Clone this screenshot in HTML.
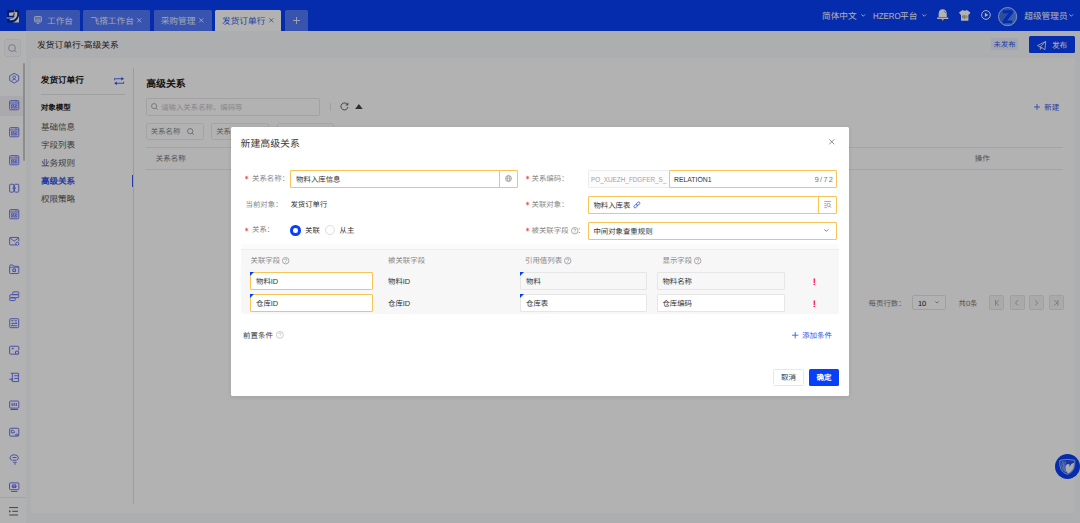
<!DOCTYPE html>
<html lang="zh-CN">
<head>
<meta charset="utf-8">
<title>发货订单行-高级关系</title>
<style>
*{box-sizing:border-box;margin:0;padding:0}
html,body{width:1080px;height:523px;overflow:hidden}
body{position:relative;background:#f8f9fc;font-family:"Liberation Sans",sans-serif;font-size:7.4px;color:#333;-webkit-font-smoothing:antialiased;text-rendering:geometricPrecision}
.a{position:absolute}
.t{position:absolute;white-space:nowrap;line-height:1;margin-top:.4px}
svg{position:absolute;overflow:visible}
/* top bar */
#top{left:0;top:0;width:1080px;height:31px;background:#0840f8}
.tab{position:absolute;top:10px;height:21px;background:rgba(255,255,255,.3);border-radius:1.5px 1.5px 0 0;color:rgba(255,255,255,.88);font-size:8.68px}
.tab.on{background:#fff;color:#3556e8}
.tab .t{top:6.2px}
.hd{color:#fff;font-size:8.66px;top:11.6px}
/* sidebar */
#side{left:0;top:31px;width:26px;height:492px;background:#fff}
#side svg{left:9px;width:10.4px;height:10.4px;fill:none;stroke:#646cf2;stroke-width:.9}
/* page header */
#ph{left:26px;top:31px;width:1054px;height:27px;background:#f8f9fc}
/* panel */
#panel{left:31px;top:58px;width:1044px;height:454.5px;background:#fff;border-radius:2px}
.menu{font-size:8.56px;color:#595959;left:40.9px}
.pg{top:295.2px;width:15px;height:14.6px;background:#f4f4f4;border:.7px solid #e4e4e4;border-radius:1.5px}
/* mask */
#mask{left:0;top:0;width:1080px;height:523px;background:rgba(0,0,0,.3)}
/* modal */
#modal{left:231px;top:127px;width:618px;height:268.7px;background:#fff;border-radius:1.5px;box-shadow:0 1px 4px rgba(0,0,0,.1)}
.lab{color:#888;font-size:7.45px;margin-top:.5px}
.star{color:#f23c3c;font-size:9px;margin-left:-.2px;margin-top:-1.1px}
.inp{position:absolute;height:17.5px;border:1px solid #f7c456;border-radius:1px;background:#fff}
.inp.g{border-color:#e6e6e6}
.inp.d{border-color:#e6e6e6;background:#f7f7f7}
.inp .t{top:4.6px;left:4.4px;font-size:7.4px;color:#333}
.tri{position:absolute;left:-1px;top:-1px;width:0;height:0;border-top:4.6px solid #0840f8;border-right:4.6px solid transparent}
.q{position:absolute;width:7.4px;height:7.4px;border:.7px solid #8a8a8a;border-radius:50%;font-size:5.6px;line-height:6px;text-align:center;color:#7a7a7a}
</style>
</head>
<body>

<!-- ================= TOP BAR ================= -->
<div id="top" class="a">
  <svg style="left:7px;top:9.5px;width:12.1px;height:12.4px" viewBox="0 0 12 12.5">
    <rect x="0" y="0" width="12" height="12.5" fill="#03239c"/>
    <path d="M12 5.8V12.5H5.8Q10.6 11 12 5.8Z" fill="#fffdf0"/>
    <path d="M2 2.7L10.2 2.1V5Q9.6 8.6 6 10Q4.4 10.5 2.6 10.3V9Q5.4 9 6.8 7.2Q7.6 6.2 7.8 5.9H2Z" fill="#fffdf0"/>
    <path d="M-.4 7.5H5.4V8.5H-.4Z" fill="#fffdf0"/>
    <path d="M6.4 3.3L7.9 3.1L6.9 6.5L5.5 6.9Z" fill="#2a5be0"/>
    <path d="M7.4 .2L7.8 2.3" stroke="#fffdf0" stroke-width=".6"/>
  </svg>

  <div class="tab" style="left:26px;width:54px">
    <svg style="left:7.8px;top:5.9px;width:8px;height:7.8px" viewBox="0 0 10 10" fill="none" stroke="#eef1ff" stroke-width="1.1"><rect x=".6" y=".6" width="8.8" height="7" rx="1.2" fill="rgba(255,255,255,.28)"/><path d="M3.4 9.4H6.6" stroke-width="1.2"/><path d="M3.2 6.2V4.4M5 6.2V3M6.8 6.2V4" stroke-width="1" stroke="#dfe6ff"/></svg>
    <span class="t" style="left:21px">工作台</span>
  </div>
  <div class="tab" style="left:83px;width:67px"><span class="t" style="left:7.5px">飞搭工作台</span><svg style="left:54.2px;top:8.3px;width:4.6px;height:4.6px" viewBox="0 0 5 5" stroke="#fff" stroke-width=".85"><path d="M.3 .3L4.7 4.7M4.7 .3L.3 4.7"/></svg></div>
  <div class="tab" style="left:153.5px;width:58px"><span class="t" style="left:7.2px">采购管理</span><svg style="left:45.2px;top:8.3px;width:4.6px;height:4.6px" viewBox="0 0 5 5" stroke="#fff" stroke-width=".85"><path d="M.3 .3L4.7 4.7M4.7 .3L.3 4.7"/></svg></div>
  <div class="tab on" style="left:215px;width:66px"><span class="t" style="left:7px">发货订单行</span><svg style="left:53.7px;top:8.3px;width:4.6px;height:4.6px" viewBox="0 0 5 5" stroke="#4a66e0" stroke-width=".85"><path d="M.3 .3L4.7 4.7M4.7 .3L.3 4.7"/></svg></div>
  <div class="tab" style="left:285px;width:23px"><svg style="left:8px;top:7px;width:7px;height:7px" viewBox="0 0 7 7" stroke="#fff" stroke-width=".8"><path d="M3.5 0V7M0 3.5H7"/></svg></div>

  <span class="t hd" style="left:822px">简体中文</span>
  <svg style="left:861px;top:14px;width:4.5px;height:3px" viewBox="0 0 6 4" fill="none" stroke="#fff" stroke-width="1.15"><path d="M.5 .5L3 3L5.5 .5"/></svg>
  <span class="t hd" style="left:872.5px"><span style="display:inline-block;transform:scaleX(.91);transform-origin:0 50%;margin-right:-2.7px">HZERO</span>平台</span>
  <svg style="left:921.5px;top:14px;width:4.5px;height:3px" viewBox="0 0 6 4" fill="none" stroke="#fff" stroke-width="1.15"><path d="M.5 .5L3 3L5.5 .5"/></svg>
  <!-- bell -->
  <svg style="left:936.9px;top:9.2px;width:11.4px;height:11.8px" viewBox="0 0 11.4 12" fill="#fff"><path d="M1.6 8.2V5Q1.6 .2 5.7 .2Q9.8 .2 9.8 5V8.2Z"/><rect x="0" y="8.7" width="11.4" height="1.4" rx=".3"/><path d="M4.3 10.3H7.1L5.7 11.9Z"/><circle cx="7.3" cy="2.5" r=".45" fill="#0840f8"/><circle cx="8.3" cy="3.5" r=".45" fill="#0840f8"/></svg>
  <!-- shirt -->
  <svg style="left:959.2px;top:9.9px;width:11.4px;height:10.8px" viewBox="0 0 11.4 10.8"><defs><clipPath id="sh"><ellipse cx="5.7" cy="6.8" rx="2.9" ry="1.9"/></clipPath></defs><path d="M3.5 0L0 2.6L1.4 4.8L2 4.4V10.8H9.4V4.4L10 4.8L11.4 2.6L7.9 0Q5.7 1.6 3.5 0Z" fill="#fff"/><g clip-path="url(#sh)"><rect x="2.6" y="4.6" width="1.3" height="4.4" fill="#ea8b7c"/><rect x="3.9" y="4.6" width="1.1" height="4.4" fill="#e8c56c"/><rect x="5" y="4.6" width="1.4" height="4.4" fill="#7fc48c"/><rect x="6.4" y="4.6" width="1.1" height="4.4" fill="#e8c56c"/><rect x="7.5" y="4.6" width="1.4" height="4.4" fill="#ea8b7c"/></g></svg>
  <!-- play -->
  <svg style="left:980.6px;top:10.4px;width:9.9px;height:9.9px" viewBox="0 0 10 10"><circle cx="5" cy="5" r="4.4" fill="none" stroke="#fff" stroke-width="1"/><path d="M3.9 2.9L7.3 5L3.9 7.1Z" fill="#fff"/></svg>
  <!-- avatar -->
  <svg style="left:997.9px;top:6.8px;width:19.2px;height:19.2px" viewBox="0 0 20 20"><defs><clipPath id="av"><circle cx="10" cy="10" r="9.4"/></clipPath></defs><circle cx="10" cy="10" r="9.4" fill="#3f6fe5"/><path d="M20.6 0H20V20H4.9Z" fill="#4c89fb" clip-path="url(#av)"/><path d="M5.1 3.3H15.5V6.5L9.6 14H14.9V17H5.1V14L11 6.5H5.1Z" fill="#0840f8"/><circle cx="10" cy="10" r="9.5" fill="none" stroke="#d2daf8" stroke-width=".9"/></svg>
  <span class="t hd" style="left:1024.3px">超级管理员</span>
  <svg style="left:1069.3px;top:14.4px;width:4.5px;height:3px" viewBox="0 0 6 4" fill="none" stroke="#fff" stroke-width="1.15"><path d="M.5 .5L3 3L5.5 .5"/></svg>
</div>

<!-- ================= SIDEBAR ================= -->
<div id="side" class="a">
  <div class="a" style="left:4.4px;top:8.2px;width:17px;height:17.4px;border:.8px solid #f0f1f5;border-radius:3px;background:#fbfbfd"></div>
  <svg style="left:8px;top:12.6px;width:9px;height:9px;stroke:#8a8fb2;stroke-width:.7" viewBox="0 0 9 9"><circle cx="4" cy="4" r="3.4"/><path d="M6.5 6.5L8.4 8.2"/></svg>
  <!-- scrollbar -->
  <div class="a" style="left:22.6px;top:31.5px;width:2.3px;height:98.5px;background:#c9c9c9;border-radius:1px"></div>
  <div class="a" style="left:0;top:65.2px;width:22.6px;height:19.4px;background:#f4f4f6"></div>
  <div class="a" style="left:0;top:466px;width:26px;height:.7px;background:#ebebef"></div>
  <svg style="top:42.2px" viewBox="0 0 10 10"><path d="M5 .3L9.3 2.7V7.3L5 9.7L.7 7.3V2.7Z" stroke-linejoin="round"/><circle cx="5" cy="4.1" r="1.35" stroke-width=".8"/><path d="M2.5 7.7Q5 4.6 7.5 7.7" stroke-width=".8"/></svg>
  <svg style="top:69.0px" viewBox="0 0 10 10"><rect x=".6" y=".6" width="8.8" height="8.8" rx=".9"/><path d="M.6 2.9H9.4" stroke-width=".8"/><path d="M1.8 1.8H2.5M3.4 1.8H4.1M5.4 1.8H8.2" stroke-width=".7"/><rect x="1.9" y="4.2" width="6.2" height="3.9" fill="#6f77f3" stroke="none"/><path d="M3.5 5L2.7 6.15L3.5 7.3M6.5 5L7.3 6.15L6.5 7.3M5.4 4.8L4.6 7.5" stroke="#fff" stroke-width=".7"/></svg>
  <svg style="top:96.4px" viewBox="0 0 10 10"><rect x=".6" y=".6" width="8.8" height="8.8" rx=".9"/><path d="M.6 2.9H9.4" stroke-width=".8"/><path d="M1.8 1.8H2.5M3.4 1.8H4.1M5.4 1.8H8.2" stroke-width=".7"/><rect x="1.9" y="4.2" width="6.2" height="3.9" fill="#6f77f3" stroke="none"/><path d="M3.5 5L2.7 6.15L3.5 7.3M6.5 5L7.3 6.15L6.5 7.3M5.4 4.8L4.6 7.5" stroke="#fff" stroke-width=".7"/></svg>
  <svg style="top:123.6px" viewBox="0 0 10 10"><rect x=".6" y=".6" width="8.8" height="8.8" rx=".9"/><path d="M.6 2.9H9.4" stroke-width=".8"/><path d="M1.8 1.8H2.5M3.4 1.8H4.1M5.4 1.8H8.2" stroke-width=".7"/><rect x="1.9" y="4.2" width="6.2" height="3.9" fill="#6f77f3" stroke="none"/><path d="M3.5 5L2.7 6.15L3.5 7.3M6.5 5L7.3 6.15L6.5 7.3M5.4 4.8L4.6 7.5" stroke="#fff" stroke-width=".7"/></svg>
  <svg style="top:151.6px" viewBox="0 0 10 10"><rect x=".6" y="1.2" width="4" height="7.6" rx=".8"/><rect x="5.4" y="1.2" width="4" height="7.6" rx=".8"/><path d="M3.4 5H6.6" stroke-width="1"/></svg>
  <svg style="top:178.2px" viewBox="0 0 10 10"><rect x=".6" y=".6" width="8.8" height="8.8" rx=".9"/><path d="M.6 2.9H9.4" stroke-width=".8"/><path d="M1.8 1.8H2.5M3.4 1.8H4.1M5.4 1.8H8.2" stroke-width=".7"/><rect x="1.9" y="4.2" width="6.2" height="3.9" fill="#6f77f3" stroke="none"/><path d="M3.5 5L2.7 6.15L3.5 7.3M6.5 5L7.3 6.15L6.5 7.3M5.4 4.8L4.6 7.5" stroke="#fff" stroke-width=".7"/></svg>
  <svg style="top:205.3px" viewBox="0 0 10 10"><path d="M7 8.6H1.4Q.6 8.6 .6 7.8V2.2Q.6 1.4 1.4 1.4H8.6Q9.4 1.4 9.4 2.2V5"/><path d="M.8 1.8L5 5L9.2 1.8"/><circle cx="8" cy="7.4" r="1.5"/></svg>
  <svg style="top:232.8px" viewBox="0 0 10 10"><path d="M.6 2.6V8.4Q.6 9.2 1.4 9.2H8.6Q9.4 9.2 9.4 8.4V3Q9.4 2.2 8.6 2.2H4.6L3.8 1H1.4Q.6 1 .6 1.8Z"/><path d="M.6 3.2H9.4" stroke-width=".7"/><circle cx="5" cy="6" r="1.4" stroke-width="1.1"/></svg>
  <svg style="top:259.8px" viewBox="0 0 10 10"><rect x="3.6" y=".8" width="5.8" height="2.6" rx=".7"/><rect x=".8" y="3.6" width="8.6" height="2.8" rx=".7"/><rect x=".6" y="6.6" width="5.4" height="2.6" rx=".7"/></svg>
  <svg style="top:286.8px" viewBox="0 0 10 10"><rect x=".7" y=".7" width="8.6" height="8.6" rx=".8"/><path d="M2.2 2.6H4.4M5.4 2.6H7.6M2.2 5.2H7.8M2.2 7.4H7.8M6.4 4.4L7.8 5.2M2.2 7.4L3.6 6.6" stroke-width=".9"/></svg>
  <svg style="top:314.3px" viewBox="0 0 10 10"><path d="M6.6 8.8H1.4Q.6 8.8 .6 8V2Q.6 1.2 1.4 1.2H8.6Q9.4 1.2 9.4 2V5"/><path d="M2.6 3.4H4.6M3.6 2.6V4.2" stroke-width=".8"/><circle cx="7.8" cy="7.4" r="1.6" stroke-width="1"/></svg>
  <svg style="top:341.3px" viewBox="0 0 10 10"><path d="M1.6 1.2H9.2V9.2H3.2V1.2M5 3.6H9M5 6.2H9"/><path d="M.2 7H3.4M2.4 5.8L3.6 7L2.4 8.2" stroke-width=".9"/></svg>
  <svg style="top:368.8px" viewBox="0 0 10 10"><rect x=".6" y="1" width="8.8" height="6.8" rx=".9"/><path d="M3 3V5.8M5 3V5.8M7 3V5.8" stroke-width="1.1"/><path d="M1.4 9.1H8.6" stroke-width="1"/></svg>
  <svg style="top:396.3px" viewBox="0 0 10 10"><rect x=".6" y="1.2" width="8.8" height="7.6" rx=".9"/><path d="M2.2 3H3.8L5.2 4.4V5.6H2.2Z" stroke-width=".9"/><path d="M6 8L7.4 6.4L8.8 8Z" stroke-width=".8"/></svg>
  <svg style="top:423.3px" viewBox="0 0 10 10"><path d="M3 6.2Q.8 5.4 1 3.4Q1.4 .8 5 .7Q8.8 .8 9 3.6Q9 5 7.6 5.6"/><path d="M3.4 3.4H7.2M3.4 6H7.4M4 8H7.4M5 9.6H6.6" stroke-width=".9"/></svg>
  <svg style="top:451.1px" viewBox="0 0 10 10"><rect x=".5" y=".8" width="9" height="6.6" rx=".8"/><path d="M2 9.1H8" stroke-width=".9"/><rect x="3.6" y="2.8" width="2.8" height="2.6" stroke-width=".9"/><path d="M2.4 4.1H7.6" stroke-width=".8"/></svg>
  <svg style="left:8.8px;top:475.6px;width:9px;height:8.6px;stroke:#4a4e5a;stroke-width:.9" viewBox="0 0 9 8.6"><path d="M.2 .6H9M3.2 4.3H9M.2 8H9"/><path d="M.2 2.9L1.8 4.3L.2 5.7Z" fill="#4a4e5a" stroke="none"/></svg>
</div>

<!-- ================= PAGE HEADER ================= -->
<div id="ph" class="a"></div>
<span class="t" style="left:37px;top:40.5px;font-size:8.76px;color:#2a2a2a">发货订单行-高级关系</span>
<div class="a" style="left:991px;top:38.4px;width:27px;height:12px;background:#e9eefc;border-radius:1px"></div>
<span class="t" style="left:993.6px;top:40.6px;font-size:7.3px;color:#3556e8">未发布</span>
<div class="a" style="left:1029.1px;top:35.9px;width:46.1px;height:17.6px;background:#0840f8;border-radius:1.5px"></div>
<svg style="left:1037.2px;top:40.6px;width:9.2px;height:9.2px" viewBox="0 0 10 10" fill="none" stroke="#fff" stroke-width=".85" stroke-linejoin="round"><path d="M.5 5L9.5 .5L8.7 9.5L5.4 7.3Z"/><path d="M9.5 .5L3.6 6.3V9L5.4 7.3"/></svg>
<span class="t" style="left:1052px;top:41.7px;font-size:7.6px;color:#fff">发布</span>

<!-- ================= PANEL ================= -->
<div id="panel" class="a"></div>
<span class="t" style="left:40.8px;top:75.8px;font-size:8.6px;font-weight:bold;color:#222">发货订单行</span>
<svg style="left:114px;top:76.6px;width:10.2px;height:8.1px" viewBox="0 0 10 8" fill="none" stroke="#4d6cf5" stroke-width="1"><path d="M.6 3.2V1.8H7.6M9.4 4.8V6.2H2.4"/><path d="M7.2 .1L9.9 1.8L7.2 3.5ZM2.8 4.5L.1 6.2L2.8 7.9Z" fill="#2f4ff0" stroke="none"/></svg>
<div class="a" style="left:40.8px;top:94px;width:84.4px;height:.7px;background:#e4e4e4"></div>
<span class="t" style="left:40.8px;top:103.7px;font-size:7.5px;font-weight:bold;color:#222">对象模型</span>
<span class="t menu" style="top:122.6px">基础信息</span>
<span class="t menu" style="top:140.6px">字段列表</span>
<span class="t menu" style="top:158.6px">业务规则</span>
<span class="t menu" style="top:176.8px;color:#3556e8;font-weight:bold">高级关系</span>
<span class="t menu" style="top:194.4px">权限策略</span>
<div class="a" style="left:133.2px;top:67.5px;width:.7px;height:436px;background:#e1e1e1"></div>
<div class="a" style="left:132.2px;top:174.5px;width:1.3px;height:12.5px;background:#3556e8"></div>

<span class="t" style="left:146.2px;top:79.2px;font-size:9.9px;font-weight:bold;color:#222">高级关系</span>
<div class="a" style="left:146.2px;top:98px;width:173.6px;height:17.8px;border:.7px solid #e9e9e9;border-radius:1.5px"></div>
<svg style="left:151px;top:103.2px;width:7px;height:7px" viewBox="0 0 9 9" fill="none" stroke="#999" stroke-width="1"><circle cx="4" cy="4" r="3.3"/><path d="M6.4 6.4L8.5 8.5"/></svg>
<span class="t" style="left:161.2px;top:103.2px;font-size:7.4px;color:#c4c4c4">请输入关系名称、编码等</span>
<div class="a" style="left:329.6px;top:102.6px;width:.7px;height:8.4px;background:#e6e6e6"></div>
<svg style="left:339.6px;top:102.4px;width:8.8px;height:8.8px" viewBox="0 0 10 10" fill="none" stroke="#555" stroke-width="1"><path d="M8.6 3.2A4 4 0 1 0 9 5.6"/><path d="M9 .8V3.4H6.4" stroke-linejoin="round"/></svg>
<svg style="left:355.3px;top:104.2px;width:7.8px;height:5px" viewBox="0 0 7 4.6" fill="#444"><path d="M3.5 0L7 4.6H0Z"/></svg>
<svg style="left:1034px;top:104.4px;width:6px;height:6px" viewBox="0 0 6 6" stroke="#3556e8" stroke-width=".8"><path d="M3 0V6M0 3H6"/></svg><span class="t" style="left:1044.2px;top:103.6px;font-size:7.5px;color:#3556e8">新建</span>

<div class="a" style="left:146.2px;top:123px;width:57.5px;height:17px;border:.7px solid #ebebeb;border-radius:1.5px"></div>
<span class="t" style="left:150.8px;top:127.8px;font-size:7.4px;color:#888">关系名称</span>
<svg style="left:187px;top:127.8px;width:7.2px;height:7.2px" viewBox="0 0 9 9" fill="none" stroke="#8a8a8a" stroke-width="1"><circle cx="4" cy="4" r="3.3"/><path d="M6.4 6.4L8.5 8.5"/></svg>
<div class="a" style="left:211.3px;top:123px;width:57.7px;height:17px;border:.7px solid #ebebeb;border-radius:1.5px"></div>
<span class="t" style="left:216.2px;top:127.8px;font-size:7.4px;color:#888">关系</span>
<div class="a" style="left:276.5px;top:123px;width:57.5px;height:17px;border:.7px solid #ebebeb;border-radius:1.5px"></div>

<div class="a" style="left:146.2px;top:147.4px;width:916.8px;height:.7px;background:#ebebeb"></div>
<div class="a" style="left:146.2px;top:169.3px;width:916.8px;height:.7px;background:#ebebeb"></div>
<span class="t" style="left:155.8px;top:154.4px;font-size:7.5px;color:#777">关系名称</span>
<span class="t" style="left:974.8px;top:154.4px;font-size:7.5px;color:#777">操作</span>

<span class="t" style="left:868.6px;top:299.2px;font-size:7.4px;color:#777">每页行数：</span>
<div class="a" style="left:912.1px;top:295.2px;width:33.5px;height:14.4px;border:.7px solid #e4e4e4;border-radius:1.5px"></div>
<span class="t" style="left:917.9px;top:299.2px;font-size:7.4px;color:#222">10</span>
<svg style="left:934.8px;top:301px;width:4px;height:2.8px" viewBox="0 0 6 4" fill="none" stroke="#666" stroke-width="1"><path d="M.5 .5L3 3L5.5 .5"/></svg>
<span class="t" style="left:958.6px;top:299.2px;font-size:7.4px;color:#777">共0条</span>
<div class="a pg" style="left:989.4px"></div><div class="a pg" style="left:1009.6px"></div><div class="a pg" style="left:1029px"></div><div class="a pg" style="left:1048.8px"></div>
<svg style="left:994.8px;top:299.6px;width:4.4px;height:5.6px" viewBox="0 0 5 6.4" fill="none" stroke="#a8a8a8" stroke-width="1"><path d="M.6 0V6.4M4.6 .3L1.4 3.2L4.6 6.1"/></svg>
<svg style="left:1015.4px;top:299.6px;width:3.2px;height:5.6px" viewBox="0 0 3.6 6.4" fill="none" stroke="#a8a8a8" stroke-width="1"><path d="M3.3 .3L.5 3.2L3.3 6.1"/></svg>
<svg style="left:1035px;top:299.6px;width:3.2px;height:5.6px" viewBox="0 0 3.6 6.4" fill="none" stroke="#a8a8a8" stroke-width="1"><path d="M.3 .3L3.1 3.2L.3 6.1"/></svg>
<svg style="left:1054.2px;top:299.6px;width:4.4px;height:5.6px" viewBox="0 0 5 6.4" fill="none" stroke="#a8a8a8" stroke-width="1"><path d="M4.4 0V6.4M.4 .3L3.6 3.2L.4 6.1"/></svg>

<div class="a" style="left:1055.2px;top:454.2px;width:25px;height:25px;border-radius:50%;background:#0840f8"></div>
<svg style="left:1059.4px;top:459.2px;width:16.6px;height:15.8px" viewBox="0 0 17 16"><path d="M.8 1.2Q8.5 -.6 16.2 1.2Q16.6 7 14.6 11Q12.4 14.6 8.6 15.6Q4.6 14.6 2.2 11Q.2 7 .8 1.2Z" fill="#2452e8" stroke="#cdd7ff" stroke-width=".8"/><path d="M3.6 2.2Q1.6 7 4.4 12M5.2 2.4Q3.2 7 5.8 12.8M6.8 2.8Q4.8 7 7 13.4" fill="none" stroke="#9fb3f8" stroke-width=".9"/><path d="M7.2 6.4Q8.8 4.4 10.6 5.2L11 7.8L12.6 5Q14.4 4 15.4 3.8Q15.6 8 13.8 11Q11.8 14 9 14.8Q6.6 12 6.6 9Q6.6 7.4 7.2 6.4Z" fill="#f4f6ff"/></svg>

<!-- ================= MASK ================= -->
<div id="mask" class="a"></div>

<!-- ================= MODAL ================= -->
<div id="modal" class="a">
  <span class="t" style="left:9.5px;top:12.6px;font-size:9.9px;color:#3a3a3a;margin-top:.8px">新建高级关系</span>
  <svg style="left:598.1px;top:12.2px;width:5.6px;height:5.6px" viewBox="0 0 6 6" stroke="#555" stroke-width=".7"><path d="M.3 .3L5.7 5.7M5.7 .3L.3 5.7"/></svg>

  <svg style="left:14.3px;top:49.1px;width:3.2px;height:3.2px" viewBox="-1.8 -1.8 3.6 3.6" stroke="#f03a3a" stroke-width=".8" stroke-linecap="round"><path d="M0 -1.6V1.6M-1.4 -.8L1.4 .8M-1.4 .8L1.4 -.8"/></svg>
  <span class="t lab" style="left:21.0px;top:47.3px">关系名称：</span>
  <div class="inp" style="left:59.0px;top:43.0px;width:227.6px"><span class="t" style="left:5.1px">物料入库信息</span>
    <div class="a" style="left:207.8px;top:0;width:1px;height:15.5px;background:#f7c456"></div>
    <svg style="left:213.6px;top:4.3px;width:7px;height:7px" viewBox="0 0 10 10" fill="none" stroke="#858585" stroke-width=".75"><circle cx="5" cy="5" r="4.4"/><ellipse cx="5" cy="5" rx="2" ry="4.4"/><path d="M.6 5H9.4M1.4 2.6H8.6M1.4 7.4H8.6" stroke-width=".7"/></svg>
  </div>
  <svg style="left:295.3px;top:49.1px;width:3.2px;height:3.2px" viewBox="-1.8 -1.8 3.6 3.6" stroke="#f03a3a" stroke-width=".8" stroke-linecap="round"><path d="M0 -1.6V1.6M-1.4 -.8L1.4 .8M-1.4 .8L1.4 -.8"/></svg>
  <span class="t lab" style="left:300.5px;top:47.3px">关系编码：</span>
  <div class="a" style="left:357.0px;top:43.0px;width:82px;height:17.5px;border:1px solid #ececec;border-radius:1.5px 0 0 1.5px;background:#fcfcfc"></div>
  <span class="t" style="left:360.2px;top:48.2px;font-size:7.3px;color:#a2a2a2;transform:scaleX(.873);transform-origin:0 50%">PO_XUEZH_FDGFER_S_</span>
  <div class="inp" style="left:438.0px;top:43.0px;width:167.6px"><span class="t" style="transform:scaleX(.925);transform-origin:0 50%">RELATION1</span><span class="t" style="left:auto;right:1.6px;color:#777;letter-spacing:1.2px">9/72</span></div>

  <span class="t lab" style="left:14.5px;top:73.2px">当前对象：</span>
  <span class="t" style="left:59.4px;top:73.2px;font-size:7.4px;color:#333">发货订单行</span>
  <svg style="left:295.3px;top:75.1px;width:3.2px;height:3.2px" viewBox="-1.8 -1.8 3.6 3.6" stroke="#f03a3a" stroke-width=".8" stroke-linecap="round"><path d="M0 -1.6V1.6M-1.4 -.8L1.4 .8M-1.4 .8L1.4 -.8"/></svg>
  <span class="t lab" style="left:300.5px;top:73.3px">关联对象：</span>
  <div class="inp" style="left:357.0px;top:69.0px;width:248.6px"><span class="t">物料入库表</span>
    <svg style="left:43.6px;top:4.2px;width:7.8px;height:7.8px" viewBox="0 0 10 10" fill="none" stroke="#3f66f5" stroke-width="1.15"><g transform="rotate(-45 5 5)"><rect x=".2" y="3.5" width="5.4" height="3" rx="1.5"/><rect x="4.4" y="3.5" width="5.4" height="3" rx="1.5"/></g></svg>
    <div class="a" style="left:228.8px;top:0;width:1px;height:15.5px;background:#f7c456"></div>
    <svg style="left:235.2px;top:4.4px;width:7.4px;height:7px" viewBox="0 0 10 9.5" fill="none" stroke="#777" stroke-width=".85"><path d="M.4 .6H9.6M.4 3.4H3M.4 6.2H3M.4 9H4"/><circle cx="6.2" cy="5.4" r="2.3"/><path d="M7.9 7.1L9.6 9"/></svg>
  </div>

  <svg style="left:14.3px;top:100.7px;width:3.2px;height:3.2px" viewBox="-1.8 -1.8 3.6 3.6" stroke="#f03a3a" stroke-width=".8" stroke-linecap="round"><path d="M0 -1.6V1.6M-1.4 -.8L1.4 .8M-1.4 .8L1.4 -.8"/></svg>
  <span class="t lab" style="left:21.0px;top:98.9px">关系：</span>
  <div class="a" style="left:59.0px;top:98.3px;width:10.5px;height:10.5px;border-radius:50%;border:3.4px solid #0840f8;background:#fff"></div>
  <span class="t" style="left:74.0px;top:99.9px;font-size:7.4px;color:#333">关联</span>
  <div class="a" style="left:94.0px;top:98.3px;width:10.2px;height:10.2px;border-radius:50%;border:.7px solid #dcdcdc;background:#fff"></div>
  <span class="t" style="left:108.6px;top:99.9px;font-size:7.4px;color:#333">从主</span>
  <svg style="left:295.3px;top:101.3px;width:3.2px;height:3.2px" viewBox="-1.8 -1.8 3.6 3.6" stroke="#f03a3a" stroke-width=".8" stroke-linecap="round"><path d="M0 -1.6V1.6M-1.4 -.8L1.4 .8M-1.4 .8L1.4 -.8"/></svg>
  <span class="t lab" style="left:300.5px;top:99.5px">被关联字段</span>
  <svg style="left:340.0px;top:100.0px;width:7.4px;height:7.4px" viewBox="0 0 10 10" fill="none" stroke="#8a8a8a" stroke-width=".95"><circle cx="5" cy="5" r="4.4"/><path d="M3.5 4Q3.5 2.6 5 2.6Q6.5 2.6 6.5 3.9Q6.5 4.7 5.6 5.1Q5 5.4 5 6.2M5 7.1V7.9" stroke-width=".9"/></svg>
  <span class="t lab" style="left:346.6px;top:99.5px">：</span>
  <div class="inp" style="left:357.0px;top:95.0px;width:248.6px"><span class="t">中间对象查重规则</span>
    <svg style="left:235.4px;top:6.2px;width:4.6px;height:3.1px" viewBox="0 0 6 4" fill="none" stroke="#666" stroke-width="1.05"><path d="M.5 .5L3 3L5.5 .5"/></svg>
  </div>

  <div class="a" style="left:9.5px;top:117.0px;width:598.3px;height:70px;background:#f7f7f7"></div>
  <div class="a" style="left:9.5px;top:117.0px;width:598.3px;height:5.2px;background:#fbfbfb"></div>
  <div class="a" style="left:9.5px;top:122.2px;width:598.3px;height:.7px;background:#efefef"></div>
  <span class="t lab" style="left:19.5px;top:129.3px">关联字段</span><svg style="left:51.0px;top:129.5px;width:7.4px;height:7.4px" viewBox="0 0 10 10" fill="none" stroke="#8a8a8a" stroke-width=".95"><circle cx="5" cy="5" r="4.4"/><path d="M3.5 4Q3.5 2.6 5 2.6Q6.5 2.6 6.5 3.9Q6.5 4.7 5.6 5.1Q5 5.4 5 6.2M5 7.1V7.9" stroke-width=".9"/></svg>
  <span class="t lab" style="left:157.0px;top:129.3px">被关联字段</span>
  <span class="t lab" style="left:294.0px;top:129.3px">引用值列表</span><svg style="left:333.0px;top:129.5px;width:7.4px;height:7.4px" viewBox="0 0 10 10" fill="none" stroke="#8a8a8a" stroke-width=".95"><circle cx="5" cy="5" r="4.4"/><path d="M3.5 4Q3.5 2.6 5 2.6Q6.5 2.6 6.5 3.9Q6.5 4.7 5.6 5.1Q5 5.4 5 6.2M5 7.1V7.9" stroke-width=".9"/></svg>
  <span class="t lab" style="left:431.5px;top:129.3px">显示字段</span><svg style="left:463.0px;top:129.5px;width:7.4px;height:7.4px" viewBox="0 0 10 10" fill="none" stroke="#8a8a8a" stroke-width=".95"><circle cx="5" cy="5" r="4.4"/><path d="M3.5 4Q3.5 2.6 5 2.6Q6.5 2.6 6.5 3.9Q6.5 4.7 5.6 5.1Q5 5.4 5 6.2M5 7.1V7.9" stroke-width=".9"/></svg>

  <div class="inp" style="left:19.0px;top:145.0px;width:122.5px"><i class="tri"></i><span class="t" style="left:5px">物料ID</span></div>
  <span class="t" style="left:157.0px;top:150.8px;font-size:7.4px;color:#333">物料ID</span>
  <div class="inp d" style="left:289.0px;top:145.0px;width:126.5px"><i class="tri"></i><span class="t" style="left:5px">物料</span></div>
  <div class="inp d" style="left:426.0px;top:145.0px;width:127.5px"><span class="t">物料名称</span></div>
  <span class="t" style="left:581.8px;top:150.6px;font-size:9.6px;font-weight:bold;color:#ff0a0a">!</span>

  <div class="inp" style="left:19.0px;top:167.0px;width:122.5px"><i class="tri"></i><span class="t" style="left:5px">仓库ID</span></div>
  <span class="t" style="left:157.0px;top:172.8px;font-size:7.4px;color:#333">仓库ID</span>
  <div class="inp g" style="left:289.0px;top:167.0px;width:126.5px"><i class="tri"></i><span class="t" style="left:5px">仓库表</span></div>
  <div class="inp g" style="left:426.0px;top:167.0px;width:127.5px"><span class="t">仓库编码</span></div>
  <span class="t" style="left:581.8px;top:172.6px;font-size:9.6px;font-weight:bold;color:#ff0a0a">!</span>

  <span class="t" style="left:12.0px;top:204.4px;font-size:7.5px;color:#3a3a3a">前置条件</span>
  <svg style="left:44.8px;top:203.7px;width:7.8px;height:7.8px" viewBox="0 0 10 10" fill="none" stroke="#bdbdbd" stroke-width=".95"><circle cx="5" cy="5" r="4.4"/><path d="M3.5 4Q3.5 2.6 5 2.6Q6.5 2.6 6.5 3.9Q6.5 4.7 5.6 5.1Q5 5.4 5 6.2M5 7.1V7.9" stroke-width=".9"/></svg>
  <svg style="left:561.3px;top:205.4px;width:6.4px;height:6.4px" viewBox="0 0 6.4 6.4" stroke="#1f4ff0" stroke-width=".8"><path d="M3.2 0V6.4M0 3.2H6.4"/></svg>
  <span class="t" style="left:571.0px;top:204.9px;font-size:7.5px;color:#1f4ff0">添加条件</span>

  <div class="a" style="left:542.3px;top:241.7px;width:30.4px;height:17px;border:.8px solid #e8e8e8;border-radius:1.5px;background:#fff"></div>
  <span class="t" style="left:550.0px;top:246.4px;font-size:7.5px;color:#333">取消</span>
  <div class="a" style="left:577.9px;top:241.7px;width:30.2px;height:17px;border-radius:1.5px;background:#0840f8"></div>
  <span class="t" style="left:585.5px;top:246.4px;font-size:7.5px;color:#fff;font-weight:bold">确定</span>
</div>

</body>
</html>
